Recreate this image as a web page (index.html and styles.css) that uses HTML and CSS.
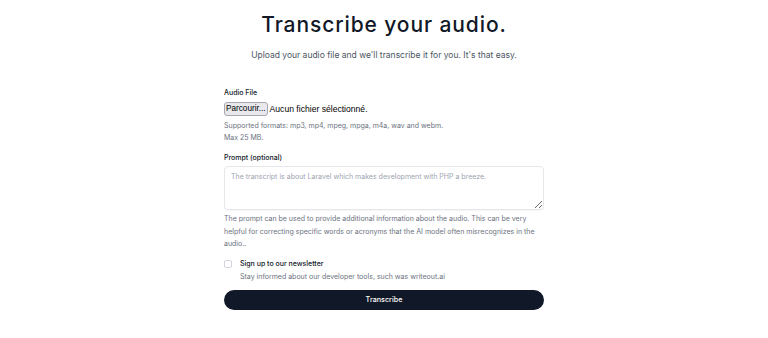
FILE: index.html
```html
<!DOCTYPE html>
<html lang="en">
<head>
<meta charset="utf-8">
<link rel="stylesheet" href="styles.css">
</head>
<body>
<main class="page">
  <header class="hero">
    <h1 class="title">Transcribe your audio.</h1>
    <p class="subtitle">Upload your audio file and we'll transcribe it for you. It's that easy.</p>
  </header>
  <form class="form">
    <div class="field">
      <label class="label">Audio File</label>
      <div class="file">
        <button type="button" class="file-btn">Parcourir...</button>
        <span class="file-name">Aucun fichier sélectionné.</span>
      </div>
      <p class="hint hint-formats">Supported formats: mp3, mp4, mpeg, mpga, m4a, wav and webm.<br>Max 25 MB.</p>
    </div>
    <div class="field">
      <label class="label">Prompt (optional)</label>
      <textarea class="prompt" placeholder="The transcript is about Laravel which makes development with PHP a breeze."></textarea>
      <p class="hint hint-prompt">The prompt can be used to provide additional information about the audio. This can be very helpful for correcting specific words or acronyms that the AI model often misrecognizes in the audio..</p>
    </div>
    <div class="check">
      <span class="box"></span>
      <div class="check-text">
        <div class="check-label">Sign up to our newsletter</div>
        <div class="check-sub">Stay informed about our developer tools, such was writeout.ai</div>
      </div>
    </div>
    <button type="button" class="submit">Transcribe</button>
  </form>
</main>
</body>
</html>
```
FILE: styles.css
```css
* { box-sizing: border-box; }
html, body { margin: 0; padding: 0; background: #fff; }
body { font-family: Inter, "Noto Sans", sans-serif; color: #111827; }
.page { width: 320px; margin: 0 auto; padding-top: 10px; }
.hero { text-align: center; }
.title {
  margin: 0;
  font-size: 21px;
  line-height: 30px;
  font-weight: 500;
  letter-spacing: 0.9px;
  color: #111827;
  white-space: nowrap;
}
.subtitle {
  margin: 9px 0 0;
  font-size: 8.5px;
  line-height: 12px;
  color: #4b5563;
  white-space: nowrap;
}
.form { margin-top: 27px; display: flex; flex-direction: column; }
.field { display: flex; flex-direction: column; }
.label { font-size: 7px; line-height: 10px; font-weight: 500; color: #111827; }
.file { display: flex; align-items: center; gap: 2px; margin-top: 4px; }
.file-btn {
  font-family: "Liberation Sans", Arial, sans-serif;
  font-size: 8.2px;
  line-height: 10px;
  padding: 1px 1px;
  background: #e9e9ed;
  border: 1px solid #a8a8b2;
  border-radius: 3px;
  color: #000;
}
.file-name { font-family: "Liberation Sans", Arial, sans-serif; font-size: 8.6px; color: #000; }
.hint { margin: 0; font-size: 7px; line-height: 12.4px; color: #6b7280; }
.hint-formats { margin-top: 4px; }
.field + .field { margin-top: 8px; }
.prompt {
  margin-top: 3px;
  width: 320px;
  height: 44px;
  border: 1px solid #e5e7eb;
  border-radius: 4px;
  padding: 5px 6px;
  font-family: Inter, sans-serif;
  font-size: 7px;
  color: #111827;
  box-shadow: 0 1px 1px rgba(0,0,0,0.04);
}
.prompt::placeholder { color: #9ca3af; }
.hint-prompt { margin-top: 3px; line-height: 12.7px; }
.check { display: flex; gap: 8px; margin-top: 7px; }
.box {
  width: 8px; height: 8px; margin-top: 2px;
  border: 1px solid #d1d5db; border-radius: 2px; flex: none;
}
.check-label { font-size: 7px; line-height: 12px; font-weight: 500; color: #111827; }
.check-sub { font-size: 7px; line-height: 12px; margin-top: 1px; color: #6b7280; }
.submit {
  margin-top: 7px;
  height: 20px;
  width: 320px;
  border: 0;
  border-radius: 10px;
  background: #111827;
  color: #fff;
  font-family: Inter, sans-serif;
  font-size: 7.2px;
  font-weight: 500;
}
```
